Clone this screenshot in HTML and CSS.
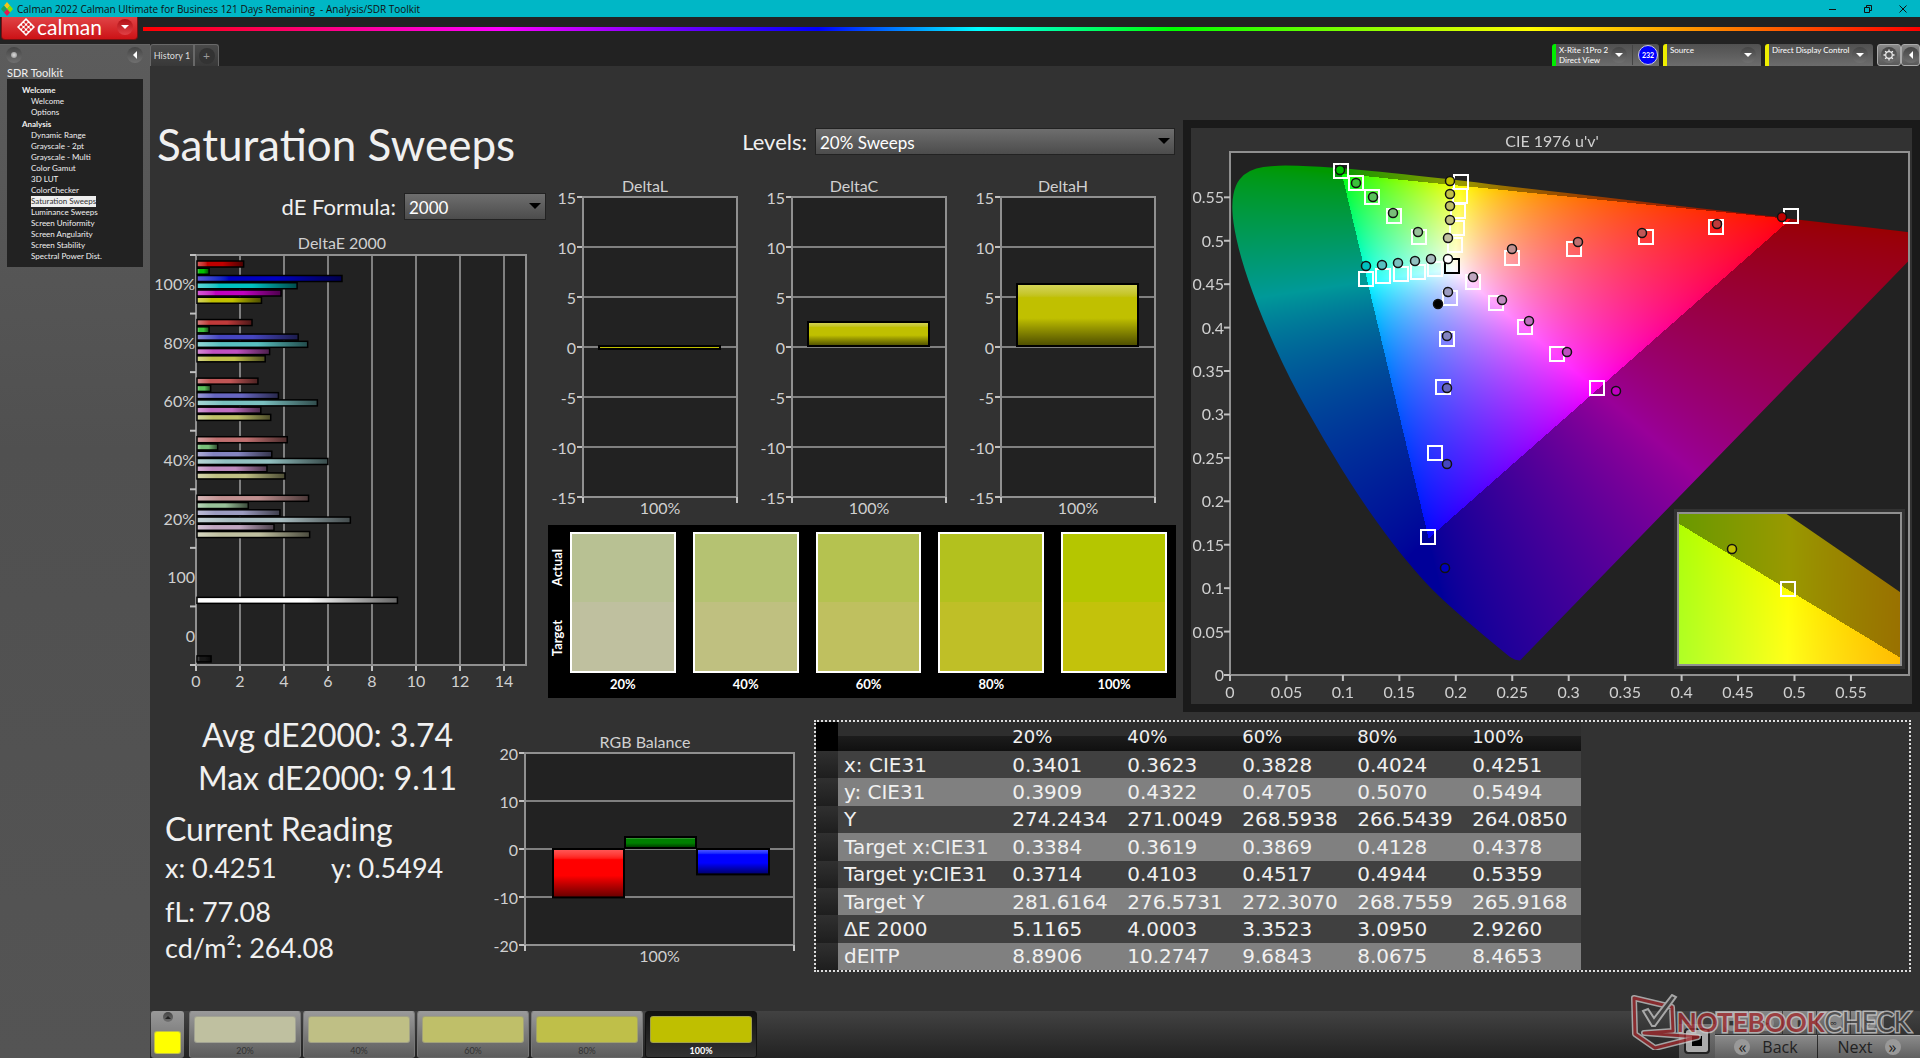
FILE: index.html
```html
<!DOCTYPE html>
<html lang="en">
<head>
  <meta charset="UTF-8" />
  <meta name="viewport" content="width=device-width, initial-scale=1.0"/>
  <title>Calman 2022 - Analysis/SDR Toolkit</title>
  <link rel="stylesheet" href="styles.css">
</head>
<body>
  <header class="titlebar">
    <svg class="app-icon" viewBox="0 0 12 14" width="12" height="14">
      <path d="M6 0l3 3.500-3 3.500-3-3.500z" fill="#f5c518"/>
      <path d="M3 3.500l3 3.500-3 3.500-3-3.500z" fill="#1fa05a"/>
      <path d="M9 3.500l3 3.500-3 3.500-3-3.500z" fill="#8be000"/>
      <path d="M6 7l3 3.500-3 3.500-3-3.500z" fill="#e3174f"/>
    </svg>
    <span class="window-title">Calman 2022 Calman Ultimate for Business 121 Days Remaining&nbsp; - Analysis/SDR Toolkit</span>
    <div class="window-buttons">
      <button aria-label="Minimize"><svg viewBox="0 0 10 10" width="10" height="10"><path d="M1 5.500h7" /></svg></button>
      <button aria-label="Restore"><svg viewBox="0 0 10 10" width="10" height="10"><path d="M1.500 3.500h5v5h-5zM3.500 3.500v-2h5v5h-2" /></svg></button>
      <button aria-label="Close"><svg viewBox="0 0 10 10" width="10" height="10"><path d="M1.500 1.500l7 7M8.500 1.500l-7 7" /></svg></button>
    </div>
  </header>

  <div class="brandbar">
    <button class="brand">
      <svg viewBox="0 0 18 18" width="18" height="18">
        <path d="M9 0l9 9-9 9-9-9z" fill="#fff"/>
        <g fill="#d8262a">
          <circle cx="9" cy="4" r="1.500"/><circle cx="6.500" cy="6.500" r="1.500"/><circle cx="11.500" cy="6.500" r="1.500"/>
          <circle cx="4" cy="9" r="1.500"/><circle cx="9" cy="9" r="1.500"/><circle cx="14" cy="9" r="1.500"/>
          <circle cx="6.500" cy="11.500" r="1.500"/><circle cx="11.500" cy="11.500" r="1.500"/><circle cx="9" cy="14" r="1.500"/>
        </g>
      </svg>
      <span class="brand-name">calman</span>
      <span class="knob red"><i class="tri down"></i></span>
    </button>
    <div class="rainbow"></div>
  </div>

  <div class="shell">
    <aside class="sidebar">
      <div class="sidebar-top">
        <span class="knob"><i class="dot"></i></span>
        <button class="knob" aria-label="Collapse"><i class="tri left"></i></button>
      </div>
      <div class="sidebar-title">SDR Toolkit</div>
      <nav class="tree">
        <div class="group">Welcome</div>
        <a href="#">Welcome</a>
        <a href="#">Options</a>
        <div class="group">Analysis</div>
        <a href="#">Dynamic Range</a>
        <a href="#">Grayscale - 2pt</a>
        <a href="#">Grayscale - Multi</a>
        <a href="#">Color Gamut</a>
        <a href="#">3D LUT</a>
        <a href="#">ColorChecker</a>
        <a href="#" class="selected">Saturation Sweeps</a>
        <a href="#">Luminance Sweeps</a>
        <a href="#">Screen Uniformity</a>
        <a href="#">Screen Angularity</a>
        <a href="#">Screen Stability</a>
        <a href="#">Spectral Power Dist.</a>
      </nav>
    </aside>

    <main class="main">
      <div class="tabbar">
        <div class="tabs">
          <button class="tab">History 1</button>
          <button class="tab add" aria-label="Add tab"><span class="knob dim">+</span></button>
        </div>
        <div class="devices">
          <button class="device meter">
            <span class="device-name">X-Rite i1Pro 2<br>Direct View</span>
            <span class="knob"><i class="tri down"></i></span>
            <span class="meter-count"><span class="count">232</span></span>
          </button>
          <button class="device source">
            <span class="device-name">Source</span>
            <span class="knob"><i class="tri down"></i></span>
          </button>
          <button class="device display">
            <span class="device-name">Direct Display Control</span>
            <span class="knob"><i class="tri down"></i></span>
          </button>
          <button class="tool" aria-label="Settings">
            <span class="knob"><svg viewBox="0 0 12 12" width="12" height="12"><circle cx="6" cy="6" r="3.300" fill="none" stroke="#eee" stroke-width="1.200"/><path d="M6 .5v2M6 9.500v2M.5 6h2M9.500 6h2M2.100 2.100l1.400 1.400M8.500 8.500l1.400 1.400M2.100 9.900l1.400-1.400M8.500 3.500l1.400-1.400" stroke="#eee" stroke-width="1.300"/></svg></span>
          </button>
          <button class="tool narrow" aria-label="Expand"><span class="knob"><i class="tri left"></i></span></button>
        </div>
      </div>

      <div class="workspace">
        <section class="upper">
          <div class="col-error">
            <h1>Saturation Sweeps</h1>
            <div class="field formula">
              <label for="formula">dE Formula:</label>
              <span class="select"><select id="formula"><option>2000</option></select></span>
            </div>
            <svg id="deltaE" class="chart" viewBox="0 0 391 455"></svg>
          </div>

          <div class="col-delta">
            <div class="field levels">
              <label for="levels">Levels:</label>
              <span class="select wide"><select id="levels"><option>20% Sweeps</option></select></span>
            </div>
            <div class="delta-row">
              <svg id="deltaL" class="chart" viewBox="0 0 209 346"></svg>
              <svg id="deltaC" class="chart" viewBox="0 0 209 346"></svg>
              <svg id="deltaH" class="chart" viewBox="0 0 209 346"></svg>
            </div>
            <div class="swatches">
              <div class="side-labels"><span>Actual</span><span>Target</span></div>
              <div class="pairs">
                <figure><div class="pair s20"></div><figcaption>20%</figcaption></figure>
                <figure><div class="pair s40"></div><figcaption>40%</figcaption></figure>
                <figure><div class="pair s60"></div><figcaption>60%</figcaption></figure>
                <figure><div class="pair s80"></div><figcaption>80%</figcaption></figure>
                <figure><div class="pair s100"></div><figcaption>100%</figcaption></figure>
              </div>
            </div>
          </div>

          <div class="cie">
            <canvas id="cieFill" width="721" height="576"></canvas>
            <svg id="cie" class="chart" viewBox="0 0 721 576"></svg>
          </div>
        </section>

        <section class="lower">
          <div class="readings">
            <div class="summary">Avg dE2000: 3.74</div>
            <div class="summary">Max dE2000: 9.11</div>
            <h2>Current Reading</h2>
            <div class="reading xy"><span>x: 0.4251</span><span>y: 0.5494</span></div>
            <div class="reading spaced">fL: 77.08</div>
            <div class="reading">cd/m²: 264.08</div>
          </div>
          <svg id="rgb" class="chart rgb" viewBox="0 0 310 240"></svg>
          <div class="table-box">
            <table>
              <thead>
                <tr><th class="stub"></th><th class="name"></th><th>20%</th><th>40%</th><th>60%</th><th>80%</th><th>100%</th></tr>
              </thead>
              <tbody>
                <tr><td class="stub"></td><td>x: CIE31</td><td>0.3401</td><td>0.3623</td><td>0.3828</td><td>0.4024</td><td>0.4251</td></tr>
                <tr><td class="stub"></td><td>y: CIE31</td><td>0.3909</td><td>0.4322</td><td>0.4705</td><td>0.5070</td><td>0.5494</td></tr>
                <tr><td class="stub"></td><td>Y</td><td>274.2434</td><td>271.0049</td><td>268.5938</td><td>266.5439</td><td>264.0850</td></tr>
                <tr><td class="stub"></td><td>Target x:CIE31</td><td>0.3384</td><td>0.3619</td><td>0.3869</td><td>0.4128</td><td>0.4378</td></tr>
                <tr><td class="stub"></td><td>Target y:CIE31</td><td>0.3714</td><td>0.4103</td><td>0.4517</td><td>0.4944</td><td>0.5359</td></tr>
                <tr><td class="stub"></td><td>Target Y</td><td>281.6164</td><td>276.5731</td><td>272.3070</td><td>268.7559</td><td>265.9168</td></tr>
                <tr><td class="stub"></td><td>ΔE 2000</td><td>5.1165</td><td>4.0003</td><td>3.3523</td><td>3.0950</td><td>2.9260</td></tr>
                <tr><td class="stub"></td><td>dEITP</td><td>8.8906</td><td>10.2747</td><td>9.6843</td><td>8.0675</td><td>8.4653</td></tr>
              </tbody>
            </table>
          </div>
        </section>
      </div>

      <footer class="bottombar">
        <button class="current" aria-label="Current color"><span class="knob small"><i class="tri up"></i></span><span class="chip yellow"></span></button>
        <div class="levels-row">
          <button class="level"><span class="chip t20"></span>20%</button>
          <button class="level"><span class="chip t40"></span>40%</button>
          <button class="level"><span class="chip t60"></span>60%</button>
          <button class="level"><span class="chip t80"></span>80%</button>
          <button class="level active"><span class="chip t100"></span>100%</button>
        </div>
        <div class="transport">
          <button class="stop" aria-label="Stop"><i></i></button>
          <div class="transport-main">
            <div class="small-buttons">
              <button aria-label="Stop read"><span class="knob">■</span></button>
              <button aria-label="Read"><span class="knob">▶</span></button>
              <button aria-label="Read series"><span class="knob">▮</span></button>
              <button aria-label="Continuous"><span class="knob">∞</span></button>
              <button aria-label="Refresh"><span class="knob">↻</span></button>
            </div>
            <div class="nav-buttons">
              <button><span class="knob">«</span>Back</button>
              <button>Next<span class="knob">»</span></button>
            </div>
          </div>
        </div>
        <div class="watermark">
          <svg viewBox="0 0 72 56" width="72" height="56">
            <path d="M4 4l38 9 1 24-29 2 54 4-43 11-20-14z" fill="none" stroke="#ccc" stroke-width="6" stroke-linejoin="round"/>
            <path d="M4 4l38 9 1 24-29 2 54 4-43 11-20-14z" fill="none" stroke="#a52a2e" stroke-width="3" stroke-linejoin="round"/>
            <path d="M13 17l5-2 6 9L42 1l4 2-21 29h-3z" fill="#444" stroke="#ccc" stroke-width="2"/>
          </svg>
          <span class="wm-red">NOTEBOOK</span><span class="wm-gray">CHECK</span>
        </div>
      </footer>
    </main>
  </div>
  <script src="main.js"></script>
</body>
</html>
```
FILE: styles.css
```css
* {
  box-sizing: border-box;
  margin: 0;
  padding: 0;
}
body {
  background-color: #222;
  color: #f0f0f0;
  font-family: Lato, "Open Sans", sans-serif;
  display: flex;
  flex-direction: column;
  min-height: 100vh;
}
button {
  border: none;
  background: none;
  color: inherit;
  font-family: inherit;
  cursor: pointer;
}
a {
  color: inherit;
  text-decoration: none;
}

/* Window title */
.titlebar {
  display: flex;
  align-items: center;
  height: 17px;
  padding-left: 1px;
  background-color: #00b7c6;
  color: #101010;
}
.window-title {
  margin-left: 4px;
  font-family: "Open Sans", sans-serif;
  font-size: 10px;
}
.window-buttons {
  display: flex;
  margin-left: auto;
}
.window-buttons button {
  display: flex;
  align-items: center;
  justify-content: center;
  width: 35px;
  height: 17px;
}
.window-buttons path {
  fill: none;
  stroke: #111;
}

/* Round knobs with a small triangle */
.knob {
  display: flex;
  align-items: center;
  justify-content: center;
  flex: none;
  width: 16px;
  height: 16px;
  border-radius: 50%;
  background: linear-gradient(#444, #707070);
  color: #ddd;
}
.knob.red {
  background: linear-gradient(#b01015, #e04045);
}
.knob.dim {
  background: #333;
  color: #999;
  font-size: 12px;
}
.knob.small {
  width: 10px;
  height: 10px;
}
.tri {
  border: 4px solid transparent;
}
.tri.down {
  border-top-color: #fff;
  border-bottom-width: 0;
}
.tri.left {
  border-right-color: #fff;
  border-left-width: 0;
}
.tri.up {
  border-width: 3px;
  border-bottom-color: #222;
  border-top-width: 0;
}
.dot {
  width: 6px;
  height: 6px;
  border-radius: 50%;
  background: radial-gradient(#ddd, #888);
}

.brandbar {
  display: flex;
  height: 27px;
}
.brand {
  display: flex;
  align-items: center;
  width: 137px;
  height: 23px;
  margin-left: 1px;
  padding: 0 4px 2px 15px;
  border: 1px solid #7a1012;
  border-top: none;
  border-radius: 0 0 4px 4px;
  background: linear-gradient(#e04446, #cc1216);
}
.brand-name {
  margin-left: 2px;
  color: #fff;
  font-size: 21px;
  line-height: 18px;
}
.brand .knob {
  margin-left: auto;
}
.rainbow {
  flex: 1;
  height: 4px;
  margin: 10px 0 0 5px;
  background: linear-gradient(90deg, #f00, #f0f 20%, #00f 38%, #0ff 47%, #0f0 58%, #ff0 78%, #f00);
}

.shell {
  display: flex;
  flex: 1;
}

/* Workflow tree */
.sidebar {
  width: 150px;
  border-top: 1px solid #666;
  background: linear-gradient(#5c5c5c, #505050 40%, #545454);
}
.sidebar-top {
  display: flex;
  justify-content: space-between;
  padding: 2px 7px 0 6px;
}
.sidebar-title {
  padding: 3px 0 0 7px;
  font-size: 11px;
  line-height: 13px;
}
.tree {
  display: flex;
  flex-direction: column;
  align-items: flex-start;
  margin: 0 7px;
  padding: 5px 0;
  background-color: #222;
  font-size: 8px;
  line-height: 11px;
}
.tree a {
  margin-left: 24px;
}
.tree .group {
  padding: 1px 0 0 15px;
  font-weight: bold;
}
.tree .selected {
  background-color: #eee;
  color: #333;
}

.main {
  display: flex;
  flex-direction: column;
  flex: 1;
  min-width: 0;
}
.tabbar {
  display: flex;
  justify-content: space-between;
  height: 22px;
}
.tabs,
.devices {
  display: flex;
}
.tab {
  width: 44px;
  border: 1px solid #686868;
  border-bottom: none;
  border-radius: 3px 0 0 0;
  background: linear-gradient(#4a4a4a, #383838);
  color: #ddd;
  font-size: 9px;
}
.tab.add {
  display: flex;
  align-items: center;
  justify-content: center;
  width: 25px;
  border-radius: 0 3px 0 0;
}
.devices {
  gap: 4px;
}
.device {
  display: flex;
  align-items: center;
  width: 98px;
  padding-left: 3px;
  border-left: 4px solid #ee0;
  border-radius: 3px 3px 0 0;
  background: linear-gradient(#505050, #6c6c6c);
  color: #fff;
  text-align: left;
}
.device .knob {
  margin: 0 5px 0 auto;
}
.device.meter {
  width: 107px;
  border-left-color: #0e0;
}
.device.display {
  width: 108px;
}
.device-name {
  align-self: flex-start;
  padding-top: 1px;
  font-size: 8px;
  line-height: 10px;
  white-space: nowrap;
}
.meter-count {
  padding: 0 1px 0 5px;
  border-left: 1px solid #444;
}
.count {
  display: block;
  width: 20px;
  height: 20px;
  border: 1px solid #ccd;
  border-radius: 50%;
  background-color: #00f;
  font-size: 7px;
  font-weight: bold;
  line-height: 18px;
  text-align: center;
}
.tool {
  display: flex;
  align-items: center;
  justify-content: center;
  width: 24px;
  border: 1px solid #aaa;
  border-radius: 3px;
  background: linear-gradient(#888, #5a5a5a);
}
.tool.narrow {
  width: 19px;
  margin-left: -4px;
}

.workspace {
  flex: 1;
  background-color: #323232;
}
.upper {
  display: grid;
  grid-template-columns: 391fr 642fr 737fr;
  align-items: start;
  padding-top: 54px;
}
h1 {
  margin-left: 7px;
  font-size: 44px;
  font-weight: normal;
  line-height: 48px;
  white-space: nowrap;
}
.field {
  display: flex;
  align-items: center;
  justify-content: flex-end;
  gap: 8px;
  font-size: 22px;
  line-height: 26px;
  white-space: nowrap;
}
/* the drop-down reaches a little into the next column */
.formula {
  margin: 25px -5px 15px 0;
}
.levels {
  margin: 8px 8px 20px 0;
}
.select {
  position: relative;
  width: 142px;
}
.select.wide {
  width: 360px;
}
.select::after {
  content: "";
  position: absolute;
  top: 10px;
  right: 5px;
  border: 6px solid transparent;
  border-top-color: #000;
  border-bottom-width: 0;
  pointer-events: none;
}
select {
  display: block;
  width: 100%;
  height: 27px;
  padding: 2px 0 0 4px;
  appearance: none;
  border: 1px solid #222;
  border-radius: 0;
  background: linear-gradient(#6e6e6e, #4c4c4c);
  color: #fff;
  font-family: inherit;
  font-size: 17px;
}

/* Charts */
.chart {
  display: block;
  width: 100%;
  height: auto;
  font-size: 16px;
}
.chart text {
  fill: #d0d0d0;
}
.plot {
  fill: #222;
}
.frame {
  fill: none;
  stroke: #909090;
  stroke-width: 2;
}
.grid {
  stroke: #808080;
  stroke-width: 2;
}
.tick {
  stroke: #c0c0c0;
  stroke-width: 2;
}
.target {
  fill: none;
  stroke: #fff;
  stroke-width: 2;
}
.target.white {
  stroke: #000;
}
.actual {
  stroke: #111;
  stroke-width: 1.5;
}
.inset-frame {
  fill: none;
  stroke: #323232;
  stroke-width: 4;
}
.delta-row {
  display: grid;
  grid-template-columns: repeat(3, 1fr);
  padding-right: 15px;
}

.swatches {
  display: flex;
  margin: 4px 7px 0;
  padding: 7px 9px 4px 0;
  background-color: #000;
  color: #fff;
  font-size: 13px;
  font-weight: bold;
}
.side-labels {
  display: flex;
  flex-direction: column;
  justify-content: space-around;
  align-items: center;
  width: 18px;
  height: 141px;
  margin-right: 4px;
}
.side-labels span {
  writing-mode: vertical-rl;
  transform: rotate(180deg);
}
.pairs {
  display: grid;
  flex: 1;
  grid-template-columns: repeat(5, 1fr);
  gap: 17px;
}
.pair {
  height: 141px;
  border: 2px solid #fff;
}
.s20 { background: linear-gradient(#b8c193 50%, #bfc09f 50%); }
.s40 { background: linear-gradient(#b5c272 50%, #bfc080 50%); }
.s60 { background: linear-gradient(#b5c250 50%, #bfc05f 50%); }
.s80 { background: linear-gradient(#b3c11e 50%, #bfbf27 50%); }
.s100 { background: linear-gradient(#b5c600 50%, #c3c20b 50%); }
figcaption {
  padding-top: 2px;
  line-height: 19px;
  text-align: center;
}

.cie {
  display: grid;
  border: 8px solid #1a1a1a;
}
.cie > * {
  grid-area: 1 / 1;
  width: 100%;
}

.lower {
  display: grid;
  grid-template-columns: 340fr 310fr 1111fr;
  align-items: start;
  padding-right: 9px;
}
.readings {
  padding: 1px 0 0 15px;
  font-size: 32px;
  line-height: 43px;
  white-space: nowrap;
}
.summary {
  text-align: center;
}
h2 {
  margin-top: 8px;
  font-size: 32px;
  font-weight: normal;
  line-height: 43px;
}
.reading {
  font-size: 27px;
  line-height: 36px;
}
.spaced {
  margin-top: 8px;
}
.xy {
  display: grid;
  grid-template-columns: 166px auto;
}
.rgb {
  margin-top: 19px;
}
.table-box {
  margin: 8px 0 0 14px;
  border: 2px dotted #ddd;
}
table {
  width: 70%;
  height: 248px;
  border-collapse: collapse;
  table-layout: fixed;
  font-family: "DejaVu Sans", sans-serif;
  font-size: 20px;
  line-height: 24px;
}
th,
td {
  padding-left: 6px;
  font-weight: normal;
  text-align: left;
  white-space: nowrap;
}
thead th {
  height: 29px;
  background: linear-gradient(#2e2e2e 50%, #1c1c1c 50%, #101010);
  font-size: 18px;
}
.stub,
thead .stub {
  width: 22px;
  background: #000;
}
.name {
  width: 22%;
}
tbody td {
  background-color: #404040;
}
tbody tr:nth-child(even) td {
  background-color: #808080;
}
tbody tr td.stub {
  background: linear-gradient(#303030, #1e1e1e);
}

/* Bottom strip */
.bottombar {
  position: relative;
  display: flex;
  height: 47px;
  background: linear-gradient(#424242, #222);
}
.current {
  display: flex;
  flex-direction: column;
  align-items: center;
  justify-content: space-between;
  width: 33px;
  margin: 0 5px 0 1px;
  padding: 1px 0 4px;
  border-radius: 3px;
  background: linear-gradient(#999, #666);
}
.chip {
  display: block;
  width: 100%;
  height: 27px;
  border: 1px solid #8888;
  border-radius: 3px;
}
.current .chip {
  width: 27px;
  height: 23px;
}
.levels-row {
  display: flex;
  gap: 2px;
}
.level {
  width: 112px;
  padding: 4px 4px 0;
  border: 1px solid;
  border-color: #999 #777 #666;
  border-radius: 3px;
  background: linear-gradient(#999, #5c5c5c);
  color: #333;
  font-size: 9px;
  line-height: 15px;
}
.level.active {
  border-color: #111;
  background: linear-gradient(#111, #333);
  color: #fff;
  font-weight: bold;
}
.yellow { background-color: #ff0; }
.t20 { background-color: #bfc0a0; }
.t40 { background-color: #bfbf85; }
.t60 { background-color: #bfbf69; }
.t80 { background-color: #bfbf49; }
.t100 { background-color: #bfbf00; }

.transport {
  display: flex;
  margin-left: auto;
}
.stop {
  align-self: flex-end;
  display: flex;
  align-items: center;
  justify-content: center;
  width: 36px;
  height: 34px;
  background: linear-gradient(#777, #555);
}
.stop i {
  width: 22px;
  height: 22px;
  border: 6px solid #aaa;
  outline: 2px solid #222;
  border-radius: 2px;
  background-color: #000;
}
.small-buttons {
  display: flex;
  gap: 1px;
}
.small-buttons button {
  display: flex;
  align-items: center;
  justify-content: center;
  width: 33px;
  height: 23px;
  background: linear-gradient(#888, #555);
}
.small-buttons .knob {
  background: #888;
  color: #333;
  font-size: 9px;
}
.nav-buttons {
  display: flex;
  gap: 1px;
  margin-top: 1px;
}
.nav-buttons button {
  display: flex;
  align-items: center;
  justify-content: center;
  gap: 12px;
  width: 102px;
  height: 23px;
  border-top: 1px solid #aaa;
  background: linear-gradient(#8a8a8a, #606060);
  color: #222;
  font-family: "Open Sans", sans-serif;
  font-size: 16px;
}
.nav-buttons .knob {
  background: #999;
  color: #222;
  line-height: 14px;
}
.watermark {
  position: absolute;
  right: 9px;
  bottom: 8px;
  display: flex;
  align-items: center;
  font-size: 26px;
  line-height: 30px;
  opacity: 0.75;
  pointer-events: none;
}
.watermark svg {
  margin-right: -25px;
}
.watermark span {
  -webkit-text-stroke: 3px #ccc;
  paint-order: stroke fill;
}
.wm-red {
  color: #a52a2e;
  font-weight: bold;
}
.wm-gray {
  color: #444;
}
```
FILE: main.js
```js
const NS = 'http://www.w3.org/2000/svg';

function add(parent, tag, attrs, text) {
  const el = document.createElementNS(NS, tag);
  for (const key in attrs) el.setAttribute(key, attrs[key]);
  if (text !== undefined) el.textContent = text;
  parent.appendChild(el);
  return el;
}

function line(parent, cls, x1, y1, x2, y2) {
  add(parent, 'line', { class: cls, x1, y1, x2, y2 });
}

function label(parent, x, y, anchor, text) {
  add(parent, 'text', { x, y, 'text-anchor': anchor }, text);
}

function frame(svg, x, y, w, h) {
  add(svg, 'rect', { class: 'frame', x, y, width: w, height: h });
}

// Shaded bar fill: light edge, flat color, dark edge
function gradient(svg, id, color, vertical) {
  const g = add(svg, 'linearGradient', { id, x1: 0, y1: 0, x2: vertical ? 0 : 1, y2: vertical ? 1 : 0 });
  add(g, 'stop', { offset: 0, 'stop-color': `color-mix(in srgb, ${color}, #fff 35%)` });
  add(g, 'stop', { offset: 0.22, 'stop-color': color });
  add(g, 'stop', { offset: 0.55, 'stop-color': color });
  add(g, 'stop', { offset: 1, 'stop-color': `color-mix(in srgb, ${color}, #000 60%)` });
  return `url(#${id})`;
}

// Red, green, blue, cyan, magenta, yellow for each saturation level
const PALETTE = {
  100: ['#c00000', '#00c000', '#0000c0', '#00c0c0', '#c000c0', '#c0c000'],
  80: ['#c03a3a', '#3ac03a', '#4646c0', '#58c0c0', '#c050c0', '#c0c048'],
  60: ['#c05656', '#5ac05a', '#6666c0', '#7ac0c0', '#c06ec0', '#c0c068'],
  40: ['#c07070', '#78c078', '#8484c0', '#92c0c0', '#c08cc0', '#c0c084'],
  20: ['#c09090', '#98c098', '#9c9cc0', '#a8bcc0', '#c0a6c0', '#c0c0a0']
};

// DeltaE 2000
const errors = [
  ['100%', 100, [2.12, 0.55, 6.59, 4.55, 3.82, 2.93]],
  ['80%', 80, [2.5, 0.55, 4.6, 5.03, 3.3, 3.1]],
  ['60%', 60, [2.77, 0.62, 3.7, 5.47, 2.9, 3.35]],
  ['40%', 40, [4.1, 0.94, 3.4, 5.95, 3.18, 4]],
  ['20%', 20, [5.07, 2.33, 3.77, 6.97, 3.5, 5.12]],
  ['100', null, [9.11], '#ffffff'],
  ['0', null, [0.64], '#181818']
];

function drawDeltaE() {
  const svg = document.getElementById('deltaE');
  const left = 46, right = 376, top = 20, bottom = 430, step = (bottom - top) / 7;
  label(svg, 192, 14, 'middle', 'DeltaE 2000');
  add(svg, 'rect', { class: 'plot', x: left, y: top, width: right - left, height: bottom - top });
  for (let v = 0; v < 15; v += 2) {
    const x = left + v * 22;
    line(svg, 'grid', x, top, x, bottom);
    line(svg, 'tick', x, bottom, x, bottom + 6);
    label(svg, x, 452, 'middle', v);
  }
  frame(svg, left, top, right - left, bottom - top);
  for (let i = 0; i <= 7; i++) line(svg, 'tick', left - 6, top + i * step, left, top + i * step);
  errors.forEach(([name, level, values, single], row) => {
    const y = top + row * step;
    label(svg, left - 1, y + step / 2 + 6, 'end', name);
    values.forEach((v, i) => {
      const color = single || PALETTE[level][i];
      const fill = gradient(svg, `e${row}-${i}`, color, false);
      const slot = single ? 6 : i;
      add(svg, 'rect', { x: left + 1, y: y + 6 + slot * 7.25, width: v * 22, height: 6, fill, stroke: '#000', 'stroke-width': 1.5 });
    });
  });
}

// Bar chart with a vertical axis, used for the deltas and the RGB balance
function drawBars(id, title, o) {
  const svg = document.getElementById(id);
  const unit = (o.bottom - o.top) / (2 * o.max);
  const zero = (o.top + o.bottom) / 2;
  label(svg, o.center, o.titleY, 'middle', title);
  add(svg, 'rect', { class: 'plot', x: o.left, y: o.top, width: o.right - o.left, height: o.bottom - o.top });
  for (let v = -o.max; v <= o.max; v += o.step) {
    const y = zero - v * unit;
    line(svg, 'grid', o.left, y, o.right, y);
    line(svg, 'tick', o.left - 6, y, o.left, y);
    label(svg, o.left - 7, y + 7, 'end', v);
  }
  frame(svg, o.left, o.top, o.right - o.left, o.bottom - o.top);
  line(svg, 'tick', o.left, o.bottom, o.left, o.bottom + 6);
  line(svg, 'tick', o.right, o.bottom, o.right, o.bottom + 6);
  label(svg, (o.left + o.right) / 2, o.bottom + 17, 'middle', '100%');
  o.bars.forEach(([x, w, value, color], i) => {
    const y = value > 0 ? zero - value * unit : zero;
    const fill = gradient(svg, `${id}-${i}`, color, true);
    add(svg, 'rect', { x, y, width: w, height: Math.max(3, Math.abs(value) * unit - 1), fill, stroke: '#000', 'stroke-width': 2 });
  });
}

const delta = { center: 104, titleY: 17, left: 42, right: 196, top: 22, bottom: 322, max: 15, step: 5 };
drawDeltaE();
drawBars('deltaL', 'DeltaL', { ...delta, bars: [[58, 121, 0.1, '#c0c000']] });
drawBars('deltaC', 'DeltaC', { ...delta, bars: [[58, 121, 2.5, '#c0c000']] });
drawBars('deltaH', 'DeltaH', { ...delta, bars: [[58, 121, 6.3, '#c0c000']] });
drawBars('rgb', 'RGB Balance', {
  center: 155, titleY: 17, left: 35, right: 304, top: 22, bottom: 214, max: 20, step: 10,
  bars: [[63, 71, -10.3, '#ff0000'], [135, 71, 2.5, '#008000'], [207, 72, -5.5, '#0000ff']]
});

// CIE 1976 u'v'
const LOCUS = [
  [.1741, .0050], [.1714, .0051], [.1689, .0069], [.1644, .0109], [.1566, .0177], [.1440, .0297],
  [.1355, .0399], [.1241, .0578], [.1096, .0868], [.0913, .1327], [.0687, .2007], [.0454, .2950],
  [.0235, .4127], [.0082, .5384], [.0039, .6548], [.0139, .7502], [.0389, .8120], [.0743, .8338],
  [.1142, .8262], [.1547, .8059], [.2296, .7543], [.3016, .6923], [.3731, .6245], [.4441, .5547],
  [.5125, .4866], [.5752, .4242], [.6270, .3725], [.6658, .3340], [.6915, .3083], [.7190, .2809], [.7347, .2653]
];
const PLOT = { left: 39, right: 718, top: 24, bottom: 547, su: 1129, sv: 868.5 };
const INSET = { left: 487, top: 385, w: 223, h: 152, u: 0.2047, v: 0.5638, cx: 597, cy: 461, su: 3064, sv: 14150 };

function toUv([x, y]) {
  const d = -2 * x + 12 * y + 3;
  return [4 * x / d, 9 * y / d];
}

// Display P3 color of a chromaticity, dimmed outside the gamut
function uvColor(u, v) {
  const d = 6 * u - 16 * v + 12;
  const x = 9 * u / d, y = 4 * v / d, z = 1 - x - y;
  const r = 2.4935 * x - 0.9314 * y - 0.4027 * z;
  const g = -0.8295 * x + 1.7627 * y + 0.0236 * z;
  const b = 0.0358 * x - 0.0762 * y + 0.9569 * z;
  const dim = Math.min(r, g, b) < 0 ? 0.6 : 1;
  const max = Math.max(r, g, b);
  return [r, g, b].map(c => 255 * dim * Math.pow(Math.max(0, c) / max, 1 / 1.4));
}

function paint(ctx, box, toU, toV, px, py) {
  const off = document.createElement('canvas');
  off.width = box.w;
  off.height = box.h;
  const octx = off.getContext('2d');
  const img = octx.createImageData(box.w, box.h);
  for (let j = 0; j < box.h; j++) {
    for (let i = 0; i < box.w; i++) {
      const c = uvColor(toU(box.x + i), toV(box.y + j));
      const k = 4 * (j * box.w + i);
      img.data[k] = c[0];
      img.data[k + 1] = c[1];
      img.data[k + 2] = c[2];
      img.data[k + 3] = 255;
    }
  }
  octx.putImageData(img, 0, 0);
  ctx.save();
  ctx.beginPath();
  ctx.rect(box.x, box.y, box.w, box.h);
  ctx.fillStyle = '#222';
  ctx.fill();
  ctx.clip();
  // smooth outline through the midpoints of the locus
  const pts = LOCUS.map(toUv).map(([u, v]) => [px(u), py(v)]);
  ctx.beginPath();
  ctx.moveTo(pts[0][0], pts[0][1]);
  for (let i = 1; i < pts.length - 1; i++) {
    ctx.quadraticCurveTo(pts[i][0], pts[i][1], (pts[i][0] + pts[i + 1][0]) / 2, (pts[i][1] + pts[i + 1][1]) / 2);
  }
  ctx.lineTo(...pts[pts.length - 1]);
  ctx.closePath();
  ctx.clip();
  ctx.drawImage(off, box.x, box.y);
  ctx.restore();
}

const ctx = document.getElementById('cieFill').getContext('2d');
paint(ctx, { x: PLOT.left, y: PLOT.top, w: PLOT.right - PLOT.left, h: PLOT.bottom - PLOT.top },
  x => (x - PLOT.left) / PLOT.su, y => (PLOT.bottom - y) / PLOT.sv,
  u => PLOT.left + u * PLOT.su, v => PLOT.bottom - v * PLOT.sv);
paint(ctx, { x: INSET.left, y: INSET.top, w: INSET.w, h: INSET.h },
  x => INSET.u + (x - INSET.cx) / INSET.su, y => INSET.v - (y - INSET.cy) / INSET.sv,
  u => INSET.cx + (u - INSET.u) * INSET.su, v => INSET.cy - (v - INSET.v) * INSET.sv);

// Marker centers in chart space, from 100% down to 20%
const targets = [
  [600, 88], [525, 99], [455, 109], [383, 121], [321, 130],
  [150, 43], [165, 55], [181, 69], [203, 88], [228, 109],
  [237, 409], [244, 325], [252, 259], [256, 211], [259, 170],
  [175, 151], [192, 148], [210, 146], [227, 144], [244, 141],
  [406, 260], [366, 226], [334, 199], [305, 175], [282, 154],
  [270, 54], [269, 68], [267, 83], [266, 100], [264, 117]
];
const actuals = [
  [591, 89], [526, 96], [451, 105], [387, 114], [321, 121],
  [149, 42], [165, 55], [182, 69], [202, 85], [227, 104],
  [254, 440], [256, 336], [256, 260], [256, 208], [257, 164],
  [175, 138], [191, 137], [207, 135], [224, 133], [240, 131],
  [425, 263], [376, 224], [338, 193], [311, 172], [282, 149],
  [259, 53], [259, 66], [259, 78], [259, 92], [257, 110]
];

function drawCie() {
  const svg = document.getElementById('cie');
  label(svg, 361, 19, 'middle', "CIE 1976 u'v'");
  frame(svg, PLOT.left, PLOT.top, PLOT.right - PLOT.left, PLOT.bottom - PLOT.top);
  for (let i = 0; i < 12; i++) {
    const value = String(Math.round(i * 5) / 100);
    const x = PLOT.left + i * 0.05 * PLOT.su, y = PLOT.bottom - i * 0.05 * PLOT.sv;
    line(svg, 'tick', x, PLOT.bottom, x, PLOT.bottom + 6);
    line(svg, 'tick', PLOT.left - 6, y, PLOT.left, y);
    label(svg, x, PLOT.bottom + 23, 'middle', value);
    label(svg, PLOT.left - 6, y + 6, 'end', value);
  }
  const square = (x, y, cls) => add(svg, 'rect', { class: cls, x: x - 7, y: y - 7, width: 14, height: 14 });
  const circle = (x, y, fill) => add(svg, 'circle', { class: 'actual', cx: x, cy: y, r: 4.5, fill });
  targets.forEach(([x, y]) => square(x, y, 'target'));
  square(261, 138, 'target white');
  actuals.forEach(([x, y], i) => circle(x, y, PALETTE[100 - (i % 5) * 20][Math.floor(i / 5)]));
  circle(257, 131, '#fff');
  circle(247, 176, '#000');
  add(svg, 'rect', { class: 'inset-frame', x: INSET.left - 2, y: INSET.top - 2, width: INSET.w + 4, height: INSET.h + 4 });
  frame(svg, INSET.left, INSET.top, INSET.w, INSET.h);
  square(INSET.cx, INSET.cy, 'target');
  circle(541, 421, '#c0c000');
}
drawCie();
```
